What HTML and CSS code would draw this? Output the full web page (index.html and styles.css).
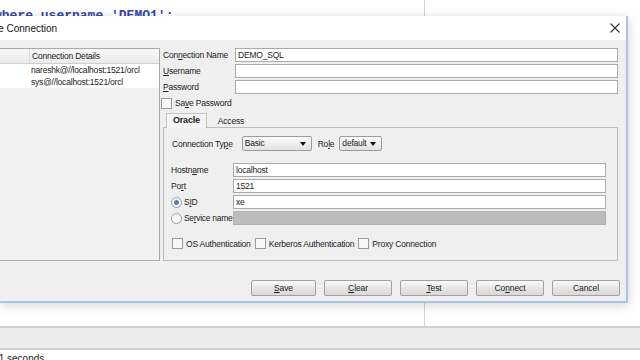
FILE: index.html
```html
<!DOCTYPE html>
<html lang="en">
<head>
  <meta charset="UTF-8" />
  <title>Select Database Connection</title>
  <link rel="stylesheet" href="styles.css">
</head>
<body>

  <div class="desktop">
    <div class="editor">
      <div class="code-pane">
        <div class="code">where username 'DEMO1';</div>
      </div>
      <div class="side-pane"></div>
    </div>
    <div class="log-tabs"></div>
    <div class="log">Task completed in 0.01 seconds</div>
  </div>

  <div class="dialog">
    <div class="titlebar">
      <span class="title">New / Select Database Connection</span>
      <svg class="close" width="10" height="10" viewBox="0 0 10 10">
        <path d="M0.5 0.5 L9.5 9.5 M9.5 0.5 L0.5 9.5" stroke="#333" stroke-width="1.1" fill="none" />
      </svg>
    </div>

    <div class="dlg-body">
      <div class="dlg-main">
        <div class="conn-list">
          <div class="list-head">
            <div class="cell first"></div>
            <div class="cell">Connection Details</div>
          </div>
          <div class="list-row">
            <div class="cell first"></div>
            <div class="cell">nareshk@//localhost:1521/orcl</div>
          </div>
          <div class="list-row">
            <div class="cell first"></div>
            <div class="cell">sys@//localhost:1521/orcl</div>
          </div>
        </div>

        <div class="conn-form">
          <div class="field-grid">
            <label>Con<u>n</u>ection Name</label>
            <div class="input">DEMO_SQL</div>
            <label><u>U</u>sername</label>
            <div class="input"></div>
            <label><u>P</u>assword</label>
            <div class="input"></div>
          </div>

          <div class="check save-pw">
            <span class="box"></span>
            <span>Sa<u>v</u>e Password</span>
          </div>

          <div class="tabs">
            <div class="tab active">Oracle</div>
            <div class="tab">Access</div>
          </div>

          <div class="tab-panel">
            <div class="type-row">
              <span>Connection Ty<u>p</u>e</span>
              <div class="select wide">Basic <span class="arrow"></span></div>
              <span class="role-label">Ro<u>l</u>e</span>
              <div class="select">default <span class="arrow"></span></div>
            </div>

            <div class="host-grid">
              <label>Hostn<u>a</u>me</label>
              <div class="input">localhost</div>
              <label>Po<u>r</u>t</label>
              <div class="input">1521</div>
              <label class="radio"><span class="dot checked"></span><span>S<u>I</u>D</span></label>
              <div class="input">xe</div>
              <label class="radio"><span class="dot"></span><span>Se<u>r</u>vice name</span></label>
              <div class="input disabled"></div>
            </div>

            <div class="auth-row">
              <div class="check"><span class="box"></span><span>OS Authentication</span></div>
              <div class="check"><span class="box"></span><span>Kerberos Authentication</span></div>
              <div class="check"><span class="box"></span><span>Proxy Connection</span></div>
            </div>
          </div>
        </div>
      </div>

      <div class="actions">
        <button class="btn save"><u>S</u>ave</button>
        <button class="btn"><u>C</u>lear</button>
        <button class="btn"><u>T</u>est</button>
        <button class="btn">Co<u>n</u>nect</button>
        <button class="btn">Cancel</button>
      </div>
    </div>
  </div>

</body>
</html>
```

FILE: styles.css
```css
body {
  margin: 0;
  width: 640px;
  height: 360px;
  overflow: hidden;
  position: relative;
  font-family: 'Liberation Sans', Arial, sans-serif;
  font-size: 8.5px;
  letter-spacing: -0.2px;
  color: #222;
  background-color: white;
}

u {
  text-decoration: underline;
  text-underline-offset: 1px;
}

/* background IDE */

.desktop {
  display: flex;
  flex-direction: column;
  height: 360px;
}

.editor {
  display: flex;
  flex-shrink: 0;
  height: 326px;
  border-bottom: 2px solid #cfcfcf;
}

.code-pane {
  width: 424px;
  border-right: 1px solid #d4d4d4;
}

.side-pane {
  flex: 1;
}

.code {
  font-family: 'Liberation Mono', monospace;
  font-size: 13px;
  font-weight: bold;
  letter-spacing: 0;
  color: #3446a6;
  margin-top: 8px;
  margin-left: -6px;
  white-space: nowrap;
}

.log-tabs {
  flex-shrink: 0;
  height: 20px;
  background-color: #ececec;
  border-bottom: 2px solid #d2d2d2;
}

.log {
  flex-shrink: 0;
  padding-top: 3px;
  font-size: 10px;
  letter-spacing: 0;
  white-space: nowrap;
  text-indent: -98px;
}

/* dialog window */

.dialog {
  position: absolute;
  left: 0;
  top: 16px;
  width: 626px;
  height: 285px;
  display: flex;
  flex-direction: column;
  background-color: #efefef;
  border-right: 2px solid #a9c6e4;
  border-bottom: 2px solid #a9c6e4;
  box-shadow: 0 2px 10px rgba(0,0,0,0.18);
}

.titlebar {
  height: 24px;
  background-color: white;
  display: flex;
  align-items: center;
  justify-content: space-between;
  padding-right: 6px;
}

.title {
  font-size: 10px;
  letter-spacing: 0;
  color: #111;
  white-space: nowrap;
  margin-left: -98px;
}

.close {
  display: block;
}

.dlg-body {
  flex: 1;
  display: flex;
  flex-direction: column;
  padding-top: 8px;
}

.dlg-main {
  display: flex;
  height: 213px;
}

.conn-list {
  width: 159px;
  border-top: 1px solid #a8a8a8;
  border-right: 1px solid #a8a8a8;
  border-bottom: 1px solid #a8a8a8;
  background-color: #f1f1f1;
}

.list-head, .list-row {
  display: flex;
  height: 12px;
  line-height: 12px;
}

.list-head {
  height: 14px;
  line-height: 14px;
  background: linear-gradient(#f8f8f8, #ebebeb);
  border-bottom: 1px solid #cfcfcf;
}

.list-row {
  background-color: white;
}

.cell {
  flex: 1;
  padding-left: 2px;
  white-space: nowrap;
}

.cell.first {
  flex: 0 0 29px;
  padding: 0;
  border-right: 1px solid #d8d8d8;
}

.list-row .cell.first {
  border-right: none;
}

.conn-form {
  flex: 1;
  margin-left: 3px;
  margin-right: 8px;
  display: flex;
  flex-direction: column;
}

.field-grid {
  display: grid;
  grid-template-columns: 72px 1fr;
  row-gap: 2px;
  align-items: center;
  white-space: nowrap;
}

.input {
  height: 12px;
  line-height: 12px;
  border: 1px solid #aaaaaa;
  background-color: white;
  padding-left: 2px;
  white-space: nowrap;
}

.input.disabled {
  background-color: #bcbcbc;
  border-color: #b0b0b0;
}

.check {
  display: flex;
  align-items: center;
  gap: 3px;
  white-space: nowrap;
}

.box {
  width: 9px;
  height: 9px;
  border: 1px solid #9a9a9a;
  background-color: #f8f8f8;
}

.save-pw {
  margin-top: 3px;
  margin-left: -2px;
  height: 12px;
}

.tabs {
  display: flex;
  align-items: flex-end;
  margin-top: 4px;
  padding-left: 3px;
  height: 14px;
}

.tab {
  padding: 0 11px;
  line-height: 12px;
}

.tab.active {
  font-weight: bold;
  font-size: 9px;
  padding: 0 6px;
  height: 14px;
  line-height: 13px;
  border: 1px solid #c4c4c4;
  border-bottom: none;
  background-color: #f4f4f4;
  position: relative;
  top: 1px;
}

.tab-panel {
  flex: 1;
  border: 1px solid #bdbdbd;
  padding: 8px 11px 0 7px;
  display: flex;
  flex-direction: column;
}

.type-row {
  display: flex;
  align-items: center;
  height: 15px;
  padding-left: 1px;
  white-space: nowrap;
}

.select {
  position: relative;
  width: 39px;
  height: 13px;
  line-height: 13px;
  padding-left: 2px;
  border: 1px solid #9c9c9c;
  border-radius: 2px;
  background: linear-gradient(#fafafa, #e2e2e2);
  margin-left: 5px;
}

.select.wide {
  width: 66px;
  margin-left: 9px;
}

.arrow {
  position: absolute;
  right: 5px;
  top: 5px;
  border-left: 3px solid transparent;
  border-right: 3px solid transparent;
  border-top: 4px solid #111;
}

.role-label {
  margin-left: 6px;
}

.host-grid {
  display: grid;
  grid-template-columns: 62px 1fr;
  row-gap: 2px;
  align-items: center;
  margin-top: 12px;
}

.host-grid .input {
  height: 12px;
}

.radio {
  display: flex;
  align-items: center;
  gap: 2px;
  white-space: nowrap;
  letter-spacing: -0.3px;
}

.dot {
  width: 9px;
  height: 9px;
  border-radius: 50%;
  border: 1px solid #9a9a9a;
  background-color: #f8f8f8;
  position: relative;
}

.dot.checked::after {
  content: "";
  position: absolute;
  left: 2px;
  top: 2px;
  width: 5px;
  height: 5px;
  border-radius: 50%;
  background-color: #4f7fc0;
}

.auth-row {
  display: flex;
  gap: 4px;
  margin-top: 13px;
  padding-left: 1px;
}

.actions {
  display: flex;
  justify-content: flex-end;
  gap: 8px;
  margin-top: 19px;
  padding-right: 6px;
}

.btn {
  width: 68px;
  height: 16px;
  padding: 0;
  font-family: 'Liberation Sans', Arial, sans-serif;
  font-size: 8.5px;
  letter-spacing: -0.1px;
  color: #222;
  border: 1px solid #a2a2a2;
  border-radius: 2px;
  background: linear-gradient(#fbfbfb, #e4e4e4 55%, #d9d9d9);
}

.btn.save {
  width: 65px;
}
```
